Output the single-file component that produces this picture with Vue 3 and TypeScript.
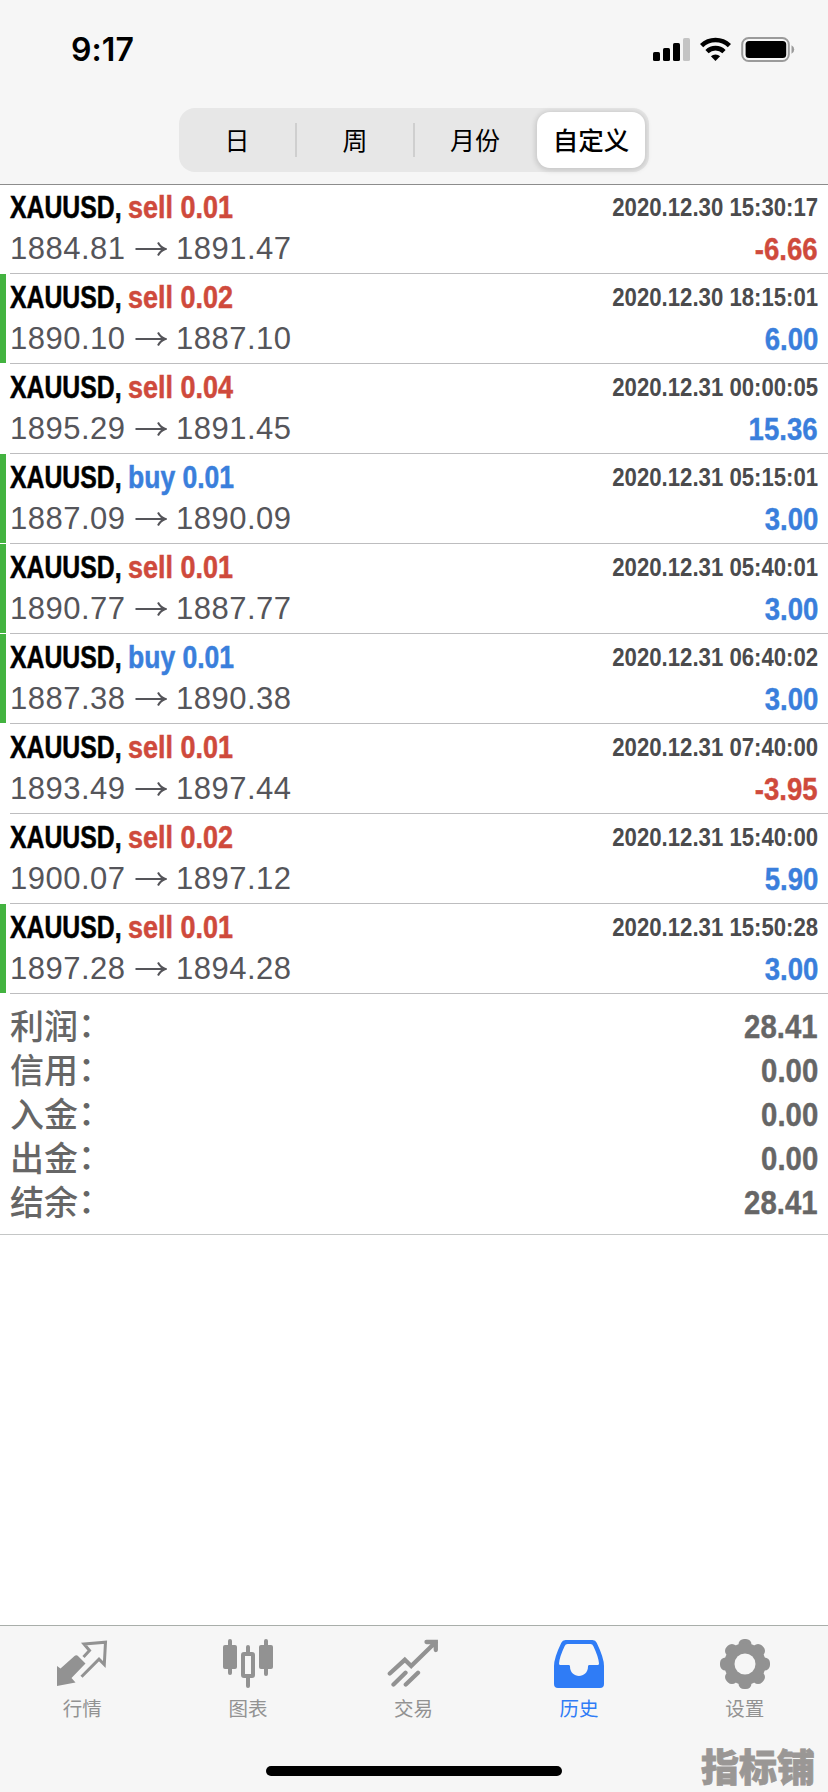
<script setup lang="ts">
interface Deal {
  side: 'sell' | 'buy'
  volume: string
  open: string
  close: string
  time: string
  profit: string
  marked: boolean
}

const periods: string[] = ['日', '周', '月份', '自定义']

const deals: Deal[] = [
  { side: 'sell', volume: '0.01', open: '1884.81', close: '1891.47', time: '2020.12.30 15:30:17', profit: '-6.66', marked: false },
  { side: 'sell', volume: '0.02', open: '1890.10', close: '1887.10', time: '2020.12.30 18:15:01', profit: '6.00', marked: true },
  { side: 'sell', volume: '0.04', open: '1895.29', close: '1891.45', time: '2020.12.31 00:00:05', profit: '15.36', marked: false },
  { side: 'buy', volume: '0.01', open: '1887.09', close: '1890.09', time: '2020.12.31 05:15:01', profit: '3.00', marked: true },
  { side: 'sell', volume: '0.01', open: '1890.77', close: '1887.77', time: '2020.12.31 05:40:01', profit: '3.00', marked: true },
  { side: 'buy', volume: '0.01', open: '1887.38', close: '1890.38', time: '2020.12.31 06:40:02', profit: '3.00', marked: true },
  { side: 'sell', volume: '0.01', open: '1893.49', close: '1897.44', time: '2020.12.31 07:40:00', profit: '-3.95', marked: false },
  { side: 'sell', volume: '0.02', open: '1900.07', close: '1897.12', time: '2020.12.31 15:40:00', profit: '5.90', marked: false },
  { side: 'sell', volume: '0.01', open: '1897.28', close: '1894.28', time: '2020.12.31 15:50:28', profit: '3.00', marked: true },
]

const totals: { label: string; value: string }[] = [
  { label: '利润', value: '28.41' },
  { label: '信用', value: '0.00' },
  { label: '入金', value: '0.00' },
  { label: '出金', value: '0.00' },
  { label: '结余', value: '28.41' },
]

const tabs: { id: string; label: string }[] = [
  { id: 'quotes', label: '行情' },
  { id: 'chart', label: '图表' },
  { id: 'trade', label: '交易' },
  { id: 'history', label: '历史' },
  { id: 'settings', label: '设置' },
]
</script>

<template>
  <div class="screen">
    <header class="header">
      <div class="status">
        <span class="clock">9:17</span>
        <svg class="status-icons" width="146" height="28" viewBox="0 0 146 28">
          <rect x="1" y="16" width="7" height="9" rx="1.6" />
          <rect x="11" y="12" width="7" height="13" rx="1.6" />
          <rect x="21" y="7" width="7" height="18" rx="1.6" />
          <rect x="31" y="2" width="7" height="23" rx="1.6" fill="#c4c4c4" />
          <g fill="none" stroke="#000" stroke-width="4.6">
            <path d="M49.6 9.6A20 20 0 0 1 77.4 9.6" />
            <path d="M55 15.6A12.2 12.2 0 0 1 72 15.6" />
          </g>
          <path d="M63.5 25l-4.6-4.7a6.6 6.6 0 0 1 9.2 0z" />
          <rect x="90.2" y="2" width="46.6" height="23" rx="6.5" fill="none" stroke="#9b9b9b" stroke-width="2" />
          <rect x="93.6" y="5" width="40.6" height="17" rx="3.5" />
          <path d="M139.5 9.3a4.6 4.6 0 0 1 0 8.4z" fill="#9b9b9b" />
        </svg>
      </div>
      <nav class="segments">
        <button v-for="(p, i) in periods" :key="p" class="segment" :class="{ selected: i === 3 }">{{ p }}</button>
      </nav>
    </header>

    <main class="content">
      <ul class="deals">
        <li v-for="d in deals" :key="d.time" class="deal">
          <span class="marker" :class="{ on: d.marked }"></span>
          <div class="deal-body">
            <div class="line top">
              <div class="title">
                <span class="symbol">XAUUSD,</span>
                <span class="order" :class="d.side">{{ d.side }} {{ d.volume }}</span>
              </div>
              <span class="time">{{ d.time }}</span>
            </div>
            <div class="line bottom">
              <div class="prices">
                <span class="price">{{ d.open }}</span>
                <svg class="arrow" width="32" height="16" viewBox="0 0 32 16">
                  <path d="M0.5 8H30M23 1.5Q25.5 6.5 30.5 8Q25.5 9.5 23 14.5" />
                </svg>
                <span class="price">{{ d.close }}</span>
              </div>
              <span class="profit" :class="{ loss: d.profit.startsWith('-') }">{{ d.profit }}</span>
            </div>
          </div>
        </li>
      </ul>
      <dl class="totals">
        <div v-for="t in totals" :key="t.label" class="total">
          <dt>{{ t.label }}<span class="colon">：</span></dt>
          <dd>{{ t.value }}</dd>
        </div>
      </dl>
    </main>

    <footer class="footer">
      <nav class="tabs">
        <a v-for="t in tabs" :key="t.id" class="tab" :class="{ active: t.id === 'history' }">
          <svg class="tab-icon" width="52" height="52" viewBox="0 0 52 52">
            <template v-if="t.id === 'quotes'">
              <path fill="currentColor" d="M1 28L4.500 30.500L18.500 18Q20.500 16.500 22.500 18.500L29.500 25.500L15.500 40L19.500 44.500L1 48Z" />
              <path fill="none" stroke="currentColor" stroke-width="3" d="M27.500 19L33.500 12.500L28 6L49.500 4.200L48.300 26.500L43 21.200L25.500 38.700" />
            </template>
            <template v-else-if="t.id === 'chart'">
              <g fill="currentColor">
                <rect x="1" y="7" width="14" height="24" rx="2" />
                <rect x="6" y="1" width="4" height="36" rx="2" />
                <rect x="37" y="7" width="14" height="24" rx="2" />
                <rect x="42" y="1" width="4" height="37" rx="2" />
                <rect x="24" y="7" width="4" height="9" rx="2" />
                <rect x="24" y="38" width="4" height="12" rx="2" />
              </g>
              <rect x="21" y="16" width="10" height="22" rx="1" fill="none" stroke="currentColor" stroke-width="4" />
            </template>
            <template v-else-if="t.id === 'trade'">
              <path fill="none" stroke="currentColor" stroke-width="4.300" stroke-linecap="round" d="M2.800 35.500L17.800 21.800L24.200 28L48.800 4M39.500 4H48.800V12M6.500 46.500L18.500 34.800M18.800 46.500L31 34.800" />
            </template>
            <template v-else-if="t.id === 'history'">
              <path fill="currentColor" fill-rule="evenodd" d="M12.500 2H39.500Q42.500 2 43.700 4.800Q51 20 51 28V46Q51 50 47 50H5Q1 50 1 46V28Q1 20 8.300 4.800Q9.500 2 12.500 2ZM14.500 6Q12.500 6 11.600 8.300Q6.500 19 6 25.500Q6 27 7.500 27H16Q17 27 17 28.500C17 41 35 41 35 28.500Q35 27 36 27H44.500Q46 27 46 25.500Q45.500 19 40.400 8.300Q39.500 6 37.500 6Z" />
            </template>
            <template v-else>
              <g fill="currentColor">
                <rect v-for="a in [0, 45, 90, 135]" :key="a" x="19.500" y="1" width="13" height="50" rx="5.500" :transform="`rotate(${a} 26 26)`" />
              </g>
              <circle cx="26" cy="26" r="15.500" fill="none" stroke="currentColor" stroke-width="10.500" />
              <circle cx="26" cy="26" r="10.500" fill="#f6f6f6" />
            </template>
          </svg>
          <span class="tab-label">{{ t.label }}</span>
        </a>
      </nav>
      <div class="home-bar"></div>
      <span class="watermark">指标铺</span>
    </footer>
  </div>
</template>

<style>
html,
body {
  margin: 0;
  background: #fff;
}
</style>

<style scoped>
.screen {
  width: 828px;
  height: 1792px;
  display: flex;
  flex-direction: column;
  overflow: hidden;
  background: #fff;
  font-family: "Liberation Sans", "Noto Sans CJK SC", sans-serif;
}
.header {
  box-sizing: border-box;
  height: 185px;
  flex: none;
  background: #f6f6f6;
  border-bottom: 1px solid #8c8c8c;
  display: flex;
  flex-direction: column;
  align-items: center;
}
.status {
  box-sizing: border-box;
  width: 100%;
  height: 108px;
  padding: 0 32px 8px 71px;
  display: flex;
  justify-content: space-between;
  align-items: center;
}
.clock {
  font: 600 32px/40px Inter, sans-serif;
  letter-spacing: 0.1px;
}
.status-icons {
  display: block;
  margin-right: -2px;
}
.segments {
  box-sizing: border-box;
  width: 470px;
  height: 64px;
  border-radius: 16px;
  background: #e7e7e7;
  display: grid;
  grid-template-columns: 118px 118px 120px 114px;
  align-items: center;
}
.segment {
  border: 0;
  padding: 0 0 2px;
  margin: 0;
  height: 34px;
  background: none;
  font: 400 25px/32px "Noto Sans CJK SC", sans-serif;
  color: #000;
}
.segment:nth-child(-n + 2) {
  border-right: 2px solid #cfcfcf;
}
.segment.selected {
  height: 56px;
  width: 108px;
  margin-left: 2px;
  border-radius: 13px;
  background: #fff;
  font-weight: 500;
  font-size: 25.5px;
  box-shadow: 0 1px 5px 2px rgba(0, 0, 0, 0.13);
}
.content {
  flex: 1;
}
.deals {
  list-style: none;
  margin: -1px 0 0;
  padding: 0;
}
.deal {
  height: 90px;
  display: flex;
}
.marker {
  flex: none;
  width: 6px;
  height: 89px;
  margin-right: 4px;
}
.marker.on {
  background: #43b340;
}
.deal-body {
  box-sizing: border-box;
  flex: 1;
  height: 90px;
  padding: 5px 10px 0 0;
  border-bottom: 1px solid #bdbdbf;
}
.line {
  display: flex;
  justify-content: space-between;
  align-items: center;
  white-space: nowrap;
}
.top {
  height: 37px;
}
.bottom {
  height: 45px;
}
.title {
  display: flex;
  font-size: 31px;
  font-weight: 700;
  -webkit-text-stroke: 0.5px currentColor;
}
.symbol {
  width: 118px;
  transform: scaleX(0.8);
  transform-origin: left;
}
.order {
  transform: scaleX(0.87);
  transform-origin: left;
}
.order.sell {
  color: #cf4a3c;
}
.order.buy {
  color: #3a7fdc;
  transform: scaleX(0.855);
}
.time {
  font-size: 25px;
  font-weight: 700;
  color: #4b4b4d;
  transform: scaleX(0.887);
  transform-origin: right;
}
.prices {
  display: flex;
  align-items: center;
  font-size: 31px;
  color: #55555a;
}
.price {
  width: 115px;
  letter-spacing: 0.5px;
}
.arrow {
  margin: 0 9px 0 10px;
  fill: none;
  stroke: #55555a;
  stroke-width: 2;
}
.profit {
  font-size: 31px;
  font-weight: 700;
  color: #3a7fdc;
  transform: translateY(1px) scaleX(0.89);
  transform-origin: right;
  -webkit-text-stroke: 0.4px currentColor;
}
.profit.loss {
  color: #cf4a3c;
}
.totals {
  box-sizing: border-box;
  height: 241px;
  margin: 0;
  padding: 10px 10px 0;
  border-bottom: 1px solid #c4c6c6;
}
.total {
  height: 44px;
  display: flex;
  justify-content: space-between;
  align-items: center;
  color: #666;
}
.total dt {
  font: 500 34px/44px "Noto Sans CJK SC", sans-serif;
  transform: translateY(-1px);
}
.colon {
  display: inline-block;
  transform: translateY(-2px);
}
.total dd {
  margin: 0;
  font-size: 33px;
  font-weight: 700;
  transform: translateY(1px) scaleX(0.89);
  transform-origin: right;
  -webkit-text-stroke: 0.4px currentColor;
}
.footer {
  box-sizing: border-box;
  position: relative;
  flex: none;
  height: 167px;
  border-top: 1px solid #a9aeaa;
  background: #f6f6f6;
  display: flex;
  flex-direction: column;
  align-items: center;
}
.tabs {
  width: 828px;
  height: 140px;
  display: grid;
  grid-template-columns: repeat(5, 1fr);
}
.tab {
  padding: 12px 1px 0 0;
  display: flex;
  flex-direction: column;
  align-items: center;
  color: #929292;
}
.tab.active {
  color: #2f7cf6;
}
.tab-icon {
  display: block;
}
.tab-label {
  margin-top: 4px;
  font: 400 19.5px/28px "Noto Sans CJK SC", sans-serif;
}
.home-bar {
  width: 296px;
  height: 10px;
  border-radius: 5px;
  background: #000;
}
.watermark {
  position: absolute;
  right: 13px;
  bottom: 0;
  font: 900 38px/54px "Noto Sans CJK SC", sans-serif;
  color: #9a9795;
  -webkit-text-stroke: 0.8px currentColor;
}
</style>
